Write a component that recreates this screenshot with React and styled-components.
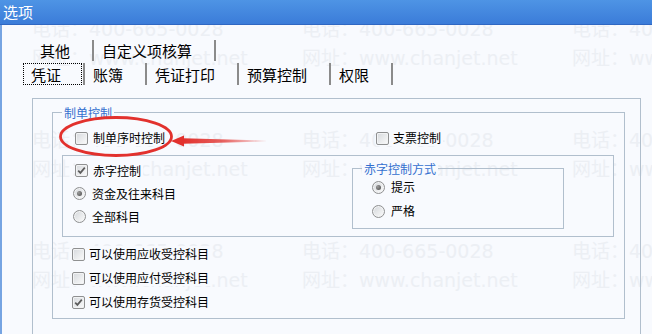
import React from 'react';
import styled, { createGlobalStyle } from 'styled-components';

const BG = '#f8fafe';
const LINE = '#b1bfcd';
const LEGEND = '#3470cf';

const Global = createGlobalStyle`
  html, body { margin: 0; padding: 0; background: ${BG}; }
  body { font-family: "Noto Sans CJK SC", "Noto Sans", sans-serif; }
  * { box-sizing: border-box; }
`;

const Window = styled.div`
  position: relative;
  width: 652px;
  height: 334px;
  overflow: hidden;
  background: ${BG};
`;

const TitleBar = styled.div`
  position: relative;
  z-index: 2;
  height: 25px;
  padding-left: 3px;
  background: linear-gradient(#4e94e5, #3b7cd9);
  border-bottom: 1px solid #2f67c2;
  color: #fff;
  font-size: 15px;
  line-height: 23px;
`;

const Watermark = styled.div`
  position: absolute;
  z-index: 0;
  left: 32px;
  top: 15px;
  display: grid;
  grid-template-columns: repeat(3, 270px);
  grid-auto-rows: 111px;
  pointer-events: none;
`;

const WmCell = styled.div`
  display: flex;
  flex-direction: column;
  font-family: "DejaVu Sans", "Noto Sans CJK SC", sans-serif;
  font-size: 19px;
  line-height: 29px;
  color: #eceff4;
  white-space: nowrap;
`;

const Body = styled.div`
  position: relative;
  z-index: 1;
  border-left: 2px solid #76a4e2;
  padding-top: 15px;
  height: 309px;
`;

const TabRow = styled.div`
  display: flex;
  margin-left: ${p => p.$offset}px;
  margin-top: ${p => p.$top || 0}px;
  height: ${p => p.$h}px;
`;

const Tab = styled.div`
  display: flex;
  align-items: stretch;
  border-right: 2px solid #8b8b8b;
  font-size: 15px;
  color: #000;
`;

const TabLabel = styled.div`
  display: flex;
  align-items: center;
  padding: 0 20px 0 7px;
  margin-right: 1px;
  border: 1px ${p => (p.$focus ? 'dotted #000' : 'solid transparent')};
`;

const Frame = styled.div`
  margin: 13px 0 0 30px;
  width: 609px;
  height: 240px;
  border: 1px solid ${LINE};
  border-bottom: none;
  padding: 13px 15px 0 19px;
`;

const Group = styled.div`
  position: relative;
  border: 1px solid ${LINE};
  padding: 0 10px 4px 9px;
  margin-top: ${p => p.$top || 0}px;
`;

const Legend = styled.div`
  position: absolute;
  top: -9px;
  left: 9px;
  padding: 0 2px;
  background: ${BG};
  color: ${LEGEND};
  font-size: 12px;
  line-height: 17px;
  white-space: nowrap;
`;

const TopRow = styled.div`
  display: grid;
  grid-template-columns: 301px auto;
  align-items: center;
  height: 24px;
  margin-top: 13px;
  padding-left: 13px;
`;

const Control = styled.label`
  justify-self: start;
  display: inline-flex;
  align-items: center;
  gap: ${p => p.$gap ?? 5}px;
  padding-right: 2px;
  background: ${BG};
  font-size: 12px;
  line-height: 16px;
  color: #000;
  white-space: nowrap;
  margin-left: ${p => p.$shift || 0}px;
`;

const Box = styled.span`
  position: relative;
  width: 13px;
  height: 13px;
  border: 1px solid #8f9091;
  border-radius: 2px;
  background: linear-gradient(135deg, #d6d9dd, #fbfbfb);
  box-shadow: inset 0 0 0 1px #f2f3f4;
  display: inline-flex;
  align-items: center;
  justify-content: center;
`;

const Round = styled.span`
  width: 13px;
  height: 13px;
  border: 1px solid #8f9091;
  border-radius: 50%;
  background: linear-gradient(135deg, #d3d6da, #fcfcfc);
  box-shadow: inset 0 0 0 1px #f3f4f5;
  display: inline-flex;
  align-items: center;
  justify-content: center;
`;

const Dot = styled.span`
  width: 5px;
  height: 5px;
  border-radius: 50%;
  background: radial-gradient(circle at 35% 35%, #9a9a9a, #4a4a4a);
`;

const InnerBox = styled.div`
  display: flex;
  height: 82px;
  margin-top: 5px;
  border: 1px solid ${LINE};
  padding: 3px 0 0 10px;
`;

const LeftCol = styled.div`
  display: flex;
  flex-direction: column;
  width: 279px;
`;

const Row = styled.div`
  display: flex;
  align-items: center;
  height: ${p => p.$h || 24}px;
`;

const SubGroup = styled.div`
  position: relative;
  margin-top: 9px;
  width: 212px;
  height: 61px;
  border: 1px solid ${LINE};
  padding: 6px 0 0 19px;
`;

const List = styled.div`
  margin-top: 5px;
  padding-left: 10px;
`;

const Overlay = styled.svg`
  position: absolute;
  left: 0;
  top: 0;
  z-index: 3;
  pointer-events: none;
`;

const Check = ({ checked, children, gap, shift }) => (
  <Control $gap={gap} $shift={shift}>
    <Box>
      {checked && (
        <svg width="11" height="11" viewBox="0 0 11 11">
          <path d="M2.2 5.6 L4.4 7.9 L8.8 2.6" fill="none" stroke="#5c5c5c" strokeWidth="1.7" />
        </svg>
      )}
    </Box>
    {children}
  </Control>
);

const Radio = ({ checked, children }) => (
  <Control $gap={6}>
    <Round>{checked && <Dot />}</Round>
    {children}
  </Control>
);

const topTabs = ['其他', '自定义项核算'];
const bottomTabs = ['凭证', '账簿', '凭证打印', '预算控制', '权限'];

export default function App() {
  const wm = Array.from({ length: 9 });
  return (
    <Window>
      <Global />
      <Watermark>
        {wm.map((_, i) => (
          <WmCell key={i}>
            <span>电话：400-665-0028</span>
            <span>网址：www.chanjet.net</span>
          </WmCell>
        ))}
      </Watermark>
      <TitleBar>选项</TitleBar>
      <Body>
        <TabRow $offset={30} $h={21}>
          {topTabs.map(t => (
            <Tab key={t}>
              <TabLabel>{t}</TabLabel>
            </Tab>
          ))}
        </TabRow>
        <TabRow $offset={21} $top={2} $h={22}>
          {bottomTabs.map((t, i) => (
            <Tab key={t}>
              <TabLabel $focus={i === 0}>{t}</TabLabel>
            </Tab>
          ))}
        </TabRow>
        <Frame>
          <Group>
            <Legend>制单控制</Legend>
            <TopRow>
              <Check>制单序时控制</Check>
              <Check gap={4}>支票控制</Check>
            </TopRow>
            <InnerBox>
              <LeftCol>
                <Row $h={23}>
                  <Check checked shift={2}>赤字控制</Check>
                </Row>
                <Row $h={23}>
                  <Radio checked>资金及往来科目</Radio>
                </Row>
                <Row $h={23}>
                  <Radio>全部科目</Radio>
                </Row>
              </LeftCol>
              <SubGroup>
                <Legend>赤字控制方式</Legend>
                <Row>
                  <Radio checked>提示</Radio>
                </Row>
                <Row>
                  <Radio>严格</Radio>
                </Row>
              </SubGroup>
            </InnerBox>
            <List>
              <Row>
                <Check gap={4}>可以使用应收受控科目</Check>
              </Row>
              <Row>
                <Check gap={4}>可以使用应付受控科目</Check>
              </Row>
              <Row>
                <Check checked gap={4}>可以使用存货受控科目</Check>
              </Row>
            </List>
          </Group>
          <Group $top={21}>
            <Legend>凭证控制</Legend>
            <Row />
          </Group>
        </Frame>
      </Body>
      <Overlay width="652" height="334" viewBox="0 0 652 334">
        <defs>
          <linearGradient id="shaft" x1="183" y1="0" x2="266" y2="0" gradientUnits="userSpaceOnUse">
            <stop offset="0" stopColor="#e2312d" stopOpacity="1" />
            <stop offset="0.5" stopColor="#e2312d" stopOpacity="0.75" />
            <stop offset="1" stopColor="#e2312d" stopOpacity="0.05" />
          </linearGradient>
        </defs>
        <ellipse cx="116" cy="136.5" rx="55.5" ry="19" fill="none" stroke="#e2312d" strokeWidth="2.8" />
        <polygon points="171,141 184,135.5 184,146.5" fill="#e2312d" />
        <polygon points="183,138.3 266,140.4 266,141.6 183,143.7" fill="url(#shaft)" />
      </Overlay>
    </Window>
  );
}
